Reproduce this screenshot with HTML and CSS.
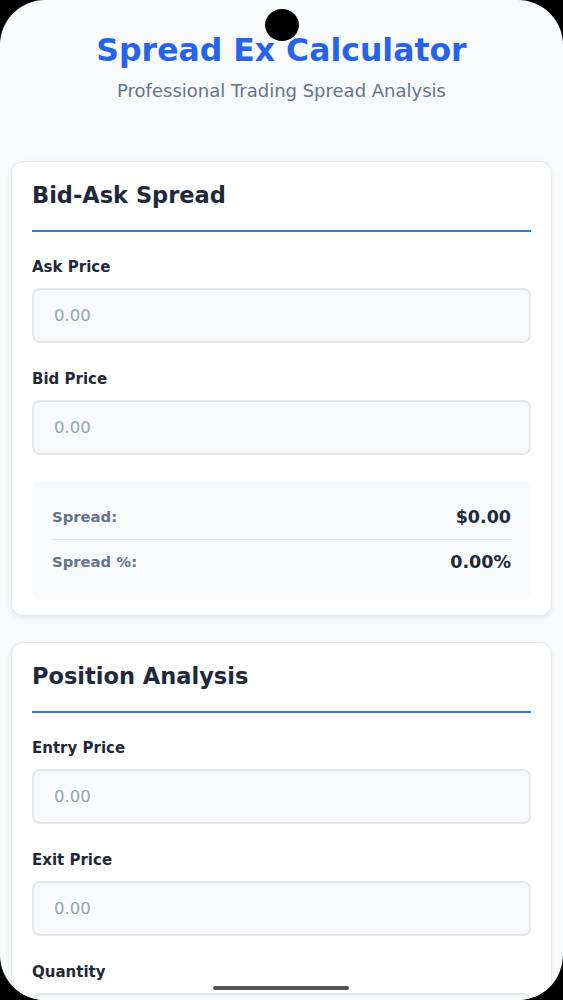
FILE: index.html
```html
<!DOCTYPE html>
<html lang="en">
<head>
<meta charset="utf-8">
<title>Spread Ex Calculator</title>
<link rel="stylesheet" href="styles.css">
</head>
<body>
<div class="screen">
  <div class="camera"></div>
  <header class="header">
    <h1 class="title">Spread Ex Calculator</h1>
    <p class="subtitle">Professional Trading Spread Analysis</p>
  </header>
  <main class="cards">
    <section class="card">
      <h2 class="card-title">Bid-Ask Spread</h2>
      <div class="field">
        <label class="label">Ask Price</label>
        <div class="input">0.00</div>
      </div>
      <div class="field">
        <label class="label">Bid Price</label>
        <div class="input">0.00</div>
      </div>
      <div class="results">
        <div class="row"><span class="row-label">Spread:</span><span class="row-value">$0.00</span></div>
        <div class="row"><span class="row-label">Spread %:</span><span class="row-value">0.00%</span></div>
      </div>
    </section>
    <section class="card">
      <h2 class="card-title">Position Analysis</h2>
      <div class="field">
        <label class="label">Entry Price</label>
        <div class="input">0.00</div>
      </div>
      <div class="field">
        <label class="label">Exit Price</label>
        <div class="input">0.00</div>
      </div>
      <div class="field">
        <label class="label">Quantity</label>
        <div class="input"></div>
      </div>
    </section>
  </main>
  <div class="home-indicator"></div>
</div>
</body>
</html>
```

FILE: styles.css
```css
html, body {
  margin: 0;
  padding: 0;
  background: #000;
}
body {
  font-family: "DejaVu Sans", "Liberation Sans", sans-serif;
}
.screen {
  position: relative;
  width: 563px;
  height: 1000px;
  border-radius: 45px;
  overflow: hidden;
  background: #f8fafc;
}
.camera {
  position: absolute;
  left: 265px;
  top: 9px;
  width: 34px;
  height: 32px;
  border-radius: 50%;
  background: #000;
}
.header {
  padding-top: 30px;
  text-align: center;
}
.title {
  margin: 0;
  font-size: 31.5px;
  line-height: 40px;
  font-weight: 700;
  color: #2563eb;
}
.subtitle {
  margin: 9px 0 0;
  font-size: 18px;
  line-height: 24px;
  color: #64748b;
}
.cards {
  margin-top: 58px;
  padding: 0 11px;
  display: flex;
  flex-direction: column;
  gap: 26px;
}
.card {
  background: #fff;
  border: 1px solid #e5e7eb;
  border-radius: 12px;
  box-shadow: 0 2px 6px rgba(15, 23, 42, 0.07);
  padding: 20px 20px 15px;
}
.card-title {
  margin: 0 0 25px;
  font-size: 22.5px;
  line-height: 26px;
  font-weight: 700;
  color: #1e293b;
  padding-bottom: 22px;
  border-bottom: 2px solid #3b74d9;
}
.field {
  margin-bottom: 26px;
}
.label {
  display: block;
  font-size: 15px;
  line-height: 20px;
  font-weight: 700;
  color: #1f2937;
  margin-bottom: 11px;
}
.input {
  box-sizing: border-box;
  height: 55px;
  border: 2px solid #e5e7eb;
  border-radius: 8px;
  background: #f9fafb;
  padding: 0 20px;
  display: flex;
  align-items: center;
  font-size: 16.5px;
  color: #9ca3af;
}
.results {
  background: #f8fafc;
  border-radius: 8px;
  padding: 14px 20px 16px;
}
.row {
  display: flex;
  justify-content: space-between;
  align-items: center;
  padding: 11px 0;
  line-height: 22px;
}
.row + .row {
  border-top: 1px solid #e2e8f0;
}
.row-label {
  font-size: 14.8px;
  font-weight: 700;
  color: #64748b;
}
.row-value {
  font-size: 17.5px;
  font-weight: 700;
  color: #1e293b;
}
.home-indicator {
  position: absolute;
  left: 213px;
  top: 986px;
  width: 136px;
  height: 4px;
  border-radius: 2px;
  background: #555;
}
```
